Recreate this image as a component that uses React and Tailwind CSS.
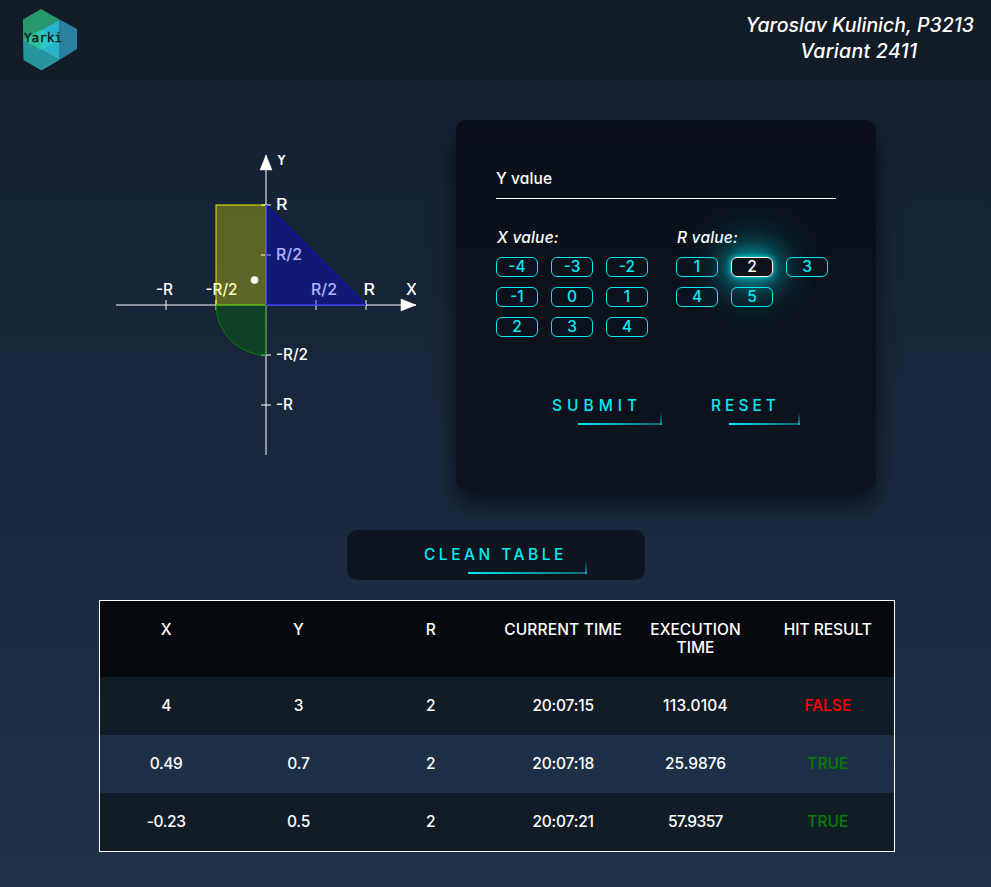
const X_VALUES = ['-4', '-3', '-2', '-1', '0', '1', '2', '3', '4'];
const R_VALUES = ['1', '2', '3', '4', '5'];

const HEADERS = [
  { label: 'X', style: '' },
  { label: 'Y', style: '' },
  { label: 'R', style: '' },
  { label: 'CURRENT TIME', style: 'px-0 whitespace-nowrap tracking-[0.15px]' },
  { label: 'EXECUTION TIME', style: 'px-3' },
  { label: 'HIT RESULT', style: 'px-3' },
];

const ROWS = [
  { x: '4', y: '3', r: '2', time: '20:07:15', exec: '113.0104', execStyle: 'tracking-[0.2px]', hit: false },
  { x: '0.49', y: '0.7', r: '2', time: '20:07:18', exec: '25.9876', execStyle: '', hit: true },
  { x: '-0.23', y: '0.5', r: '2', time: '20:07:21', exec: '57.9357', execStyle: 'tracking-[-0.6px]', hit: true },
];

function Logo() {
  return (
    <svg className="block" width="56" height="64" viewBox="0 0 56 64">
      <polygon points="1,11.5 19,1 37.5,11.5 1,32" fill="#27976c" />
      <polygon points="37.5,11.5 55,21 55,41 37.5,52" fill="#2a809f" />
      <polygon points="1,32 37.5,52 19.5,62.5 1.5,52" fill="#26969c" />
      <polygon points="37.5,11.5 37.5,52 1,32" fill="#2bb3ca" />
      <polygon points="1,32 19,21.5 19,42" fill="#2bc4a0" />
      <polygon points="19,21.5 37.5,32 19,42" fill="#2cc8ca" />
      <text x="2" y="33.8" fontSize="12.5" textLength="38" lengthAdjust="spacingAndGlyphs" fill="#0b1a22" stroke="#0b1a22" strokeWidth="0.4" className="font-['DejaVu_Sans_Mono',monospace]">Yarki</text>
    </svg>
  );
}

function AxisLabel({ x, y, w, children }) {
  return (
    <text x={x} y={y} textLength={w} lengthAdjust="spacingAndGlyphs" fill="white">
      {children}
    </text>
  );
}

function Graph() {
  return (
    <svg width="300" height="300" viewBox="0 0 300 300" className="block overflow-hidden text-[15.5px] font-medium">
      <g stroke="white" strokeWidth="1">
        <line x1="0" y1="150" x2="300" y2="150" />
        <line x1="150" y1="0" x2="150" y2="300" />
        {[50, 100, 200, 250].map((p) => (
          <g key={p}>
            <line x1={p} y1="145" x2={p} y2="155" />
            <line x1="145" y1={p} x2="155" y2={p} />
          </g>
        ))}
      </g>
      <polygon points="150,0 144,15 156,15" fill="white" stroke="white" strokeWidth="0.5" />
      <polygon points="300,150 285,144 285,156" fill="white" stroke="white" strokeWidth="0.5" />
      <AxisLabel x={160} y={10} w={11}>Y</AxisLabel>
      <AxisLabel x={160} y={55} w={11.5}>R</AxisLabel>
      <AxisLabel x={160} y={105} w={26}>R/2</AxisLabel>
      <AxisLabel x={160} y={205} w={32}>-R/2</AxisLabel>
      <AxisLabel x={160} y={255} w={17}>-R</AxisLabel>
      <AxisLabel x={40} y={140} w={17}>-R</AxisLabel>
      <AxisLabel x={89.5} y={140} w={32}>-R/2</AxisLabel>
      <AxisLabel x={195} y={140} w={26}>R/2</AxisLabel>
      <AxisLabel x={247.5} y={140} w={11.5}>R</AxisLabel>
      <AxisLabel x={290} y={140} w={11}>X</AxisLabel>
      <rect x="100" y="50" width="50" height="100" fill="yellow" fillOpacity="0.3" stroke="yellow" strokeOpacity="0.9" />
      <polygon points="150,50 250,150 150,150" fill="blue" fillOpacity="0.3" stroke="blue" />
      <path d="M100 150 A50 50 0 0 0 150 200 L150 150 Z" fill="green" fillOpacity="0.3" stroke="green" />
      <circle cx="138.5" cy="125" r="3.8" fill="white" />
    </svg>
  );
}

function Choice({ value, active }) {
  return (
    <button
      className={
        active
          ? 'flex h-5 items-center justify-center rounded-md border border-white text-[15.5px] leading-none text-white shadow-[0_0_5px_#03e9f4,0_0_25px_#03e9f4,0_0_50px_#03e9f4,0_0_100px_rgba(3,233,244,0.3)]'
          : 'flex h-5 items-center justify-center rounded-md border border-[#03e9f4] text-[15.5px] leading-none text-[#03e9f4]'
      }
    >
      {value}
    </button>
  );
}

function Choices({ label, values, selected }) {
  return (
    <div className="w-[180px] shrink-0">
      <div className="h-[29px] pl-px text-[15.5px] leading-[19px] tracking-[0.2px] italic">{label}</div>
      <div className="grid w-[152px] grid-cols-[42px_42px_42px] gap-x-[13px] gap-y-2.5">
        {values.map((v) => (
          <Choice key={v} value={v} active={v === selected} />
        ))}
      </div>
    </div>
  );
}

function NeonButton({ width, line, text, children }) {
  return (
    <button className={`relative block h-[37px] text-left text-[15.5px] leading-[36px] text-[#03e9f4] ${width} ${text}`}>
      <span className="block h-[37px]">{children}</span>
      <span className={`absolute right-0 bottom-0 h-0.5 bg-linear-to-r from-[#03e9f4] to-[#03e9f4]/40 ${line}`} />
      <span className="absolute right-0 bottom-0 h-[13px] w-0.5 bg-linear-to-t from-[#03e9f4]/60 to-transparent" />
    </button>
  );
}

export default function App() {
  return (
    <div className="flex h-[887px] w-[991px] flex-col overflow-hidden bg-linear-to-b from-[#141e30] to-[#1f324a] font-['Inter','Liberation_Sans',sans-serif] font-medium text-white [font-feature-settings:'cv11']">
      <header className="flex h-20 shrink-0 items-center justify-between bg-[#121c27] pr-[17px] pl-[22px]">
        <Logo />
        <div className="pb-1 text-center text-[19.5px] leading-[26px] italic">
          <div>Yaroslav Kulinich, P3213</div>
          <div className="pr-0.5 tracking-[0.3px]">Variant 2411</div>
        </div>
      </header>

      <main className="flex flex-col items-center pt-10 pl-px">
        <div className="flex items-start gap-10">
          <div className="pt-[35px]">
            <Graph />
          </div>
          <section className="h-[370px] w-[420px] rounded-[10px] bg-black/50 p-10 shadow-[0_15px_25px_rgba(0,0,0,0.6)]">
            <div className="h-[39px] border-b border-white pt-[9px] text-[15.5px] leading-[20px] tracking-[0.1px]">Y value</div>
            <div className="flex pt-[29px]">
              <Choices label="X value:" values={X_VALUES} selected={null} />
              <Choices label="R value:" values={R_VALUES} selected="2" />
            </div>
            <div className="flex gap-[49px] pt-[51px] pl-14">
              <NeonButton width="w-[110px]" line="w-[84px]" text="tracking-[5px]">SUBMIT</NeonButton>
              <NeonButton width="w-[89px]" line="w-[71px]" text="tracking-[4px]">RESET</NeonButton>
            </div>
          </section>
        </div>

        <div className="mt-10 flex h-[50px] w-[298px] rounded-[10px] bg-[#0e151e] pt-[7px] pl-[77px]">
          <NeonButton width="w-[163px]" line="w-[119px]" text="tracking-[3.5px]">CLEAN TABLE</NeonButton>
        </div>

        <div className="mt-5 ml-0.5 w-[796px] border border-white text-center text-[15.5px] leading-[18px]">
          <div className="grid h-[76px] grid-cols-6 bg-[#06090e] pt-5">
            {HEADERS.map((h) => (
              <div key={h.label} className={h.style}>{h.label}</div>
            ))}
          </div>
          {ROWS.map((row, i) => (
            <div key={row.time} className={`grid h-[58px] grid-cols-6 items-center ${i % 2 === 0 ? 'bg-[#121c27]' : ''}`}>
              <div className="tracking-[-0.4px]">{row.x}</div>
              <div className="tracking-[-0.2px]">{row.y}</div>
              <div>{row.r}</div>
              <div className="tracking-[-0.2px]">{row.time}</div>
              <div className={row.execStyle}>{row.exec}</div>
              <div className={row.hit ? 'text-[#008000]' : 'text-[#ff0000]'}>{row.hit ? 'TRUE' : 'FALSE'}</div>
            </div>
          ))}
        </div>
      </main>
    </div>
  );
}
